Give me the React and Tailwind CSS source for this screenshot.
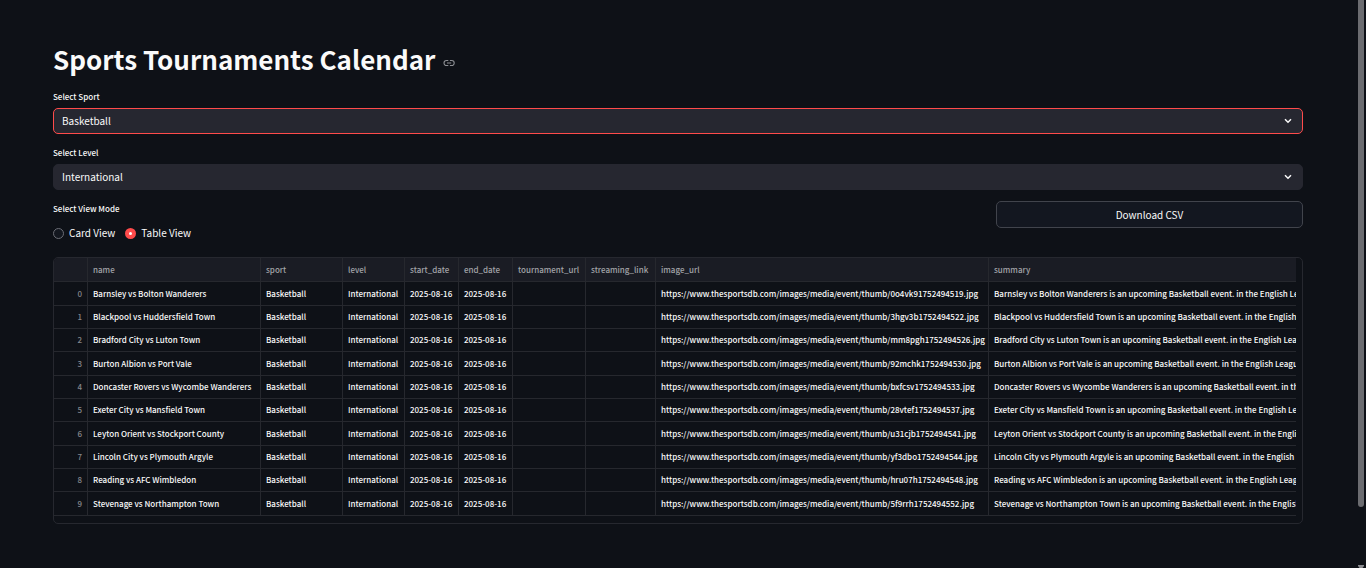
import { useState } from "react";

const EVENTS = [
  ["Barnsley vs Bolton Wanderers", "0o4vk91752494519"],
  ["Blackpool vs Huddersfield Town", "3hgv3b1752494522"],
  ["Bradford City vs Luton Town", "mm8pgh1752494526"],
  ["Burton Albion vs Port Vale", "92mchk1752494530"],
  ["Doncaster Rovers vs Wycombe Wanderers", "bxfcsv1752494533"],
  ["Exeter City vs Mansfield Town", "28vtef1752494537"],
  ["Leyton Orient vs Stockport County", "u31cjb1752494541"],
  ["Lincoln City vs Plymouth Argyle", "yf3dbo1752494544"],
  ["Reading vs AFC Wimbledon", "hru07h1752494548"],
  ["Stevenage vs Northampton Town", "5f9rrh1752494552"],
];

const COLUMNS = [
  "name",
  "sport",
  "level",
  "start_date",
  "end_date",
  "tournament_url",
  "streaming_link",
  "image_url",
  "summary",
];

function SelectField({ id, label, options, active }) {
  return (
    <div className="flex flex-col">
      <label htmlFor={id} className="text-[8px] leading-4 font-medium">
        {label}
      </label>
      <div className="mt-[3px] grid items-center">
        <select
          id={id}
          className={
            "col-start-1 row-start-1 h-[26px] w-full appearance-none rounded-[5px] border bg-[#262730] px-2 text-[10px] leading-4 outline-none " +
            (active ? "border-[#ff4b4b]" : "border-[#262730]")
          }
        >
          {options.map((option) => (
            <option key={option}>{option}</option>
          ))}
        </select>
        <svg
          viewBox="0 0 8 6"
          className="pointer-events-none col-start-1 row-start-1 mr-[11px] h-[6px] w-2 justify-self-end"
          fill="none"
          stroke="#fafafa"
          strokeWidth="1.5"
          aria-hidden="true"
        >
          <path d="M1 1.2 L4 4.2 L7 1.2" />
        </svg>
      </div>
    </div>
  );
}

function RadioOption({ label, checked, onChange }) {
  return (
    <label className="flex items-center gap-[5px] text-[10px] leading-4">
      <input
        type="radio"
        name="view-mode"
        checked={checked}
        onChange={onChange}
        className="size-[11px] appearance-none rounded-full border border-[#6b6d75] bg-[#13171f] checked:border-4 checked:border-[#ff4b4b] checked:bg-white"
      />
      {label}
    </label>
  );
}

function EventTable() {
  const cell = "overflow-hidden border-b border-[#26282e] px-[5px] py-0 text-left whitespace-nowrap";
  return (
    <div className="mt-4 rounded-[5px] border border-[#26282f] pr-[6px] pb-[7px]">
      <div className="overflow-hidden rounded-tl-[4px]">
        <table className="w-full table-fixed border-separate border-spacing-0 text-[8px] leading-4">
          <colgroup>
            <col className="w-[34px]" />
            <col className="w-[173px]" />
            <col className="w-[82px]" />
            <col className="w-[62px]" />
            <col className="w-[54px]" />
            <col className="w-[54px]" />
            <col className="w-[73px]" />
            <col className="w-[70px]" />
            <col className="w-[333px]" />
            <col />
          </colgroup>
          <thead>
            <tr className="h-6 bg-[#1a1c24] text-[#a3a4a9]">
              <th className={cell + " border-r"}></th>
              {COLUMNS.map((name) => (
                <th key={name} className={cell + " border-r font-medium last:border-r-0"}>
                  {name}
                </th>
              ))}
            </tr>
          </thead>
          <tbody className="font-medium">
            {EVENTS.map(([name, image], index) => (
              <tr key={name} className="h-[23px] nth-[3n+1]:h-6">
                <td className={cell + " border-r text-[#85868b]"}>
                  <div className="text-right">{index}</div>
                </td>
                <td className={cell + " border-r"}>{name}</td>
                <td className={cell + " border-r"}>Basketball</td>
                <td className={cell + " border-r"}>International</td>
                <td className={cell + " border-r"}>2025-08-16</td>
                <td className={cell + " border-r"}>2025-08-16</td>
                <td className={cell + " border-r"}></td>
                <td className={cell + " border-r"}></td>
                <td className={cell + " border-r"}>
                  {"https://www.thesportsdb.com/images/media/event/thumb/" + image + ".jpg"}
                </td>
                <td className={cell}>
                  {name + " is an upcoming Basketball event. in the English League 1"}
                </td>
              </tr>
            ))}
          </tbody>
        </table>
      </div>
    </div>
  );
}

export default function App() {
  const [view, setView] = useState("table");
  return (
    <div className="flex min-h-screen bg-[#0e1117] font-['Noto_Sans_CJK_SC','Noto_Sans',sans-serif] text-[#fafafa]">
      <main className="min-w-0 flex-1 pt-[39px] pr-[55px] pb-10 pl-[53px]">
        <h1 className="flex items-center gap-2 text-[26px] leading-10 font-bold">
          Sports Tournaments Calendar
          <a href="#sports-tournaments-calendar" aria-label="Link to heading" className="mt-2">
            <svg viewBox="0 0 12 8" className="h-2 w-3" fill="none" stroke="#8d8f94" strokeWidth="1.1">
              <path d="M5.3 1.5 H3.5 a2.5 2.5 0 0 0 0 5 H5.3 M6.9 1.5 H8.7 a2.5 2.5 0 0 1 0 5 H6.9 M4 4 H8.2" />
            </svg>
          </a>
        </h1>
        <div className="mt-[10px] flex flex-col gap-[11px]">
          <SelectField id="sport" label="Select Sport" options={["Basketball", "Soccer", "Tennis"]} active />
          <SelectField id="level" label="Select Level" options={["International", "National"]} />
          <div className="grid grid-cols-[3fr_1fr] gap-[22px]">
            <fieldset>
              <legend className="text-[8px] leading-4 font-medium">Select View Mode</legend>
              <div className="mt-2 flex gap-[10px]">
                <RadioOption label="Card View" checked={view === "card"} onChange={() => setView("card")} />
                <RadioOption label="Table View" checked={view === "table"} onChange={() => setView("table")} />
              </div>
            </fieldset>
            <button
              type="button"
              className="h-[27px] rounded-[5px] border border-[#41444c] bg-[#131720] text-[10px] leading-4"
            >
              Download CSV
            </button>
          </div>
        </div>
        <EventTable />
      </main>
      <div className="flex w-2 flex-col" aria-hidden="true">
        <div className="h-[507px] w-[6px] rounded-b-[3px] bg-[#6b6c70]"></div>
        <svg viewBox="0 0 6 3" className="mt-auto h-[3px] w-[6px]" fill="#8b8c90">
          <path d="M0 0 H6 V1 L4.5 3 H1.5 L0 1 Z" />
        </svg>
      </div>
    </div>
  );
}
